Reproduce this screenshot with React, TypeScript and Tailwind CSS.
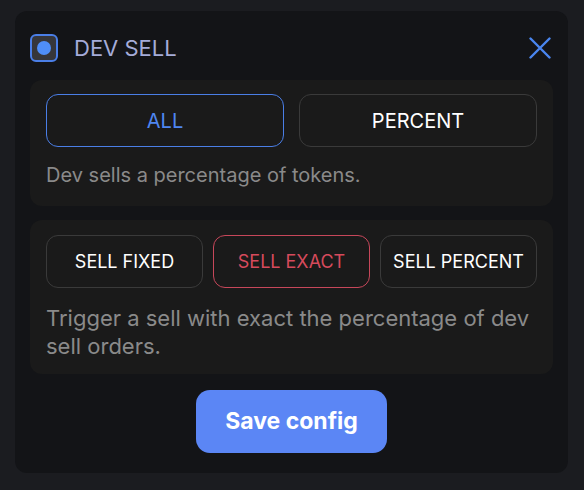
import React, { useState } from 'react';

const modeOptions = ['ALL', 'PERCENT'];
const sellOptions = ['SELL FIXED', 'SELL EXACT', 'SELL PERCENT'];

const App = () => {
  const [mode, setMode] = useState('ALL');
  const [sell, setSell] = useState('SELL EXACT');

  return (
    <div
      className="min-h-screen bg-[#1b1c20] pl-[15px] pt-[11px]"
      style={{ fontFamily: 'Inter, "Noto Sans", sans-serif' }}
    >
      <div className="w-[553px] rounded-[12px] bg-[#131417] px-[15px] pt-[23px] pb-[20px]">
        {/* header */}
        <div className="flex h-[28px] items-center justify-between">
          <div className="flex items-center gap-4">
            <div className="flex h-[28px] w-[28px] items-center justify-center rounded-[6px] border-2 border-[#4a7ee6] bg-[#36363a]">
              <div className="h-[14px] w-[14px] rounded-full bg-[#4f8ef7]" />
            </div>
            <span className="text-[22px] leading-none text-[#a5acd9]">DEV SELL</span>
          </div>
          <button className="mr-[2px]">
            <svg width="22" height="22" viewBox="0 0 22 22" fill="none" stroke="#4a86f0" strokeWidth="2.4" strokeLinecap="round">
              <path d="M1.5 1.5L20.5 20.5M20.5 1.5L1.5 20.5" />
            </svg>
          </button>
        </div>

        {/* mode card */}
        <div className="mt-[18px] rounded-[12px] bg-[#1a1a1a] px-4 pt-[14px] pb-[17px]">
          <div className="grid grid-cols-2 gap-[15px]">
            {modeOptions.map((opt) => (
              <button
                key={opt}
                onClick={() => setMode(opt)}
                className={
                  mode === opt
                    ? 'h-[53px] rounded-[12px] border border-[#4a7ee6] text-[20px] text-[#4f86f0]'
                    : 'h-[53px] rounded-[12px] border border-[#3a3a3a] text-[20px] text-white'
                }
              >
                {opt}
              </button>
            ))}
          </div>
          <p className="mt-[14px] text-[20px] leading-[28px] text-[#8a8a8a]">
            Dev sells a percentage of tokens.
          </p>
        </div>

        {/* sell card */}
        <div className="mt-[14px] rounded-[12px] bg-[#1a1a1a] px-4 pt-[15px] pb-[14px]">
          <div className="grid grid-cols-3 gap-[10px]">
            {sellOptions.map((opt) => (
              <button
                key={opt}
                onClick={() => setSell(opt)}
                className={
                  sell === opt
                    ? 'h-[53px] rounded-[12px] border border-[#c7475a] text-[18px] text-[#d64a5c]'
                    : 'h-[53px] rounded-[12px] border border-[#3a3a3a] text-[18px] text-white'
                }
              >
                {opt}
              </button>
            ))}
          </div>
          <p className="mt-[16px] text-[22px] leading-[28px] text-[#8a8a8a]">
            Trigger a sell with exact the percentage of dev sell orders.
          </p>
        </div>

        <div className="mt-[16px] flex justify-center">
          <button className="h-[63px] w-[191px] rounded-[14px] bg-[#5b86f5] text-[23px] font-bold text-white">
            Save config
          </button>
        </div>
      </div>
    </div>
  );
};

export default App;
